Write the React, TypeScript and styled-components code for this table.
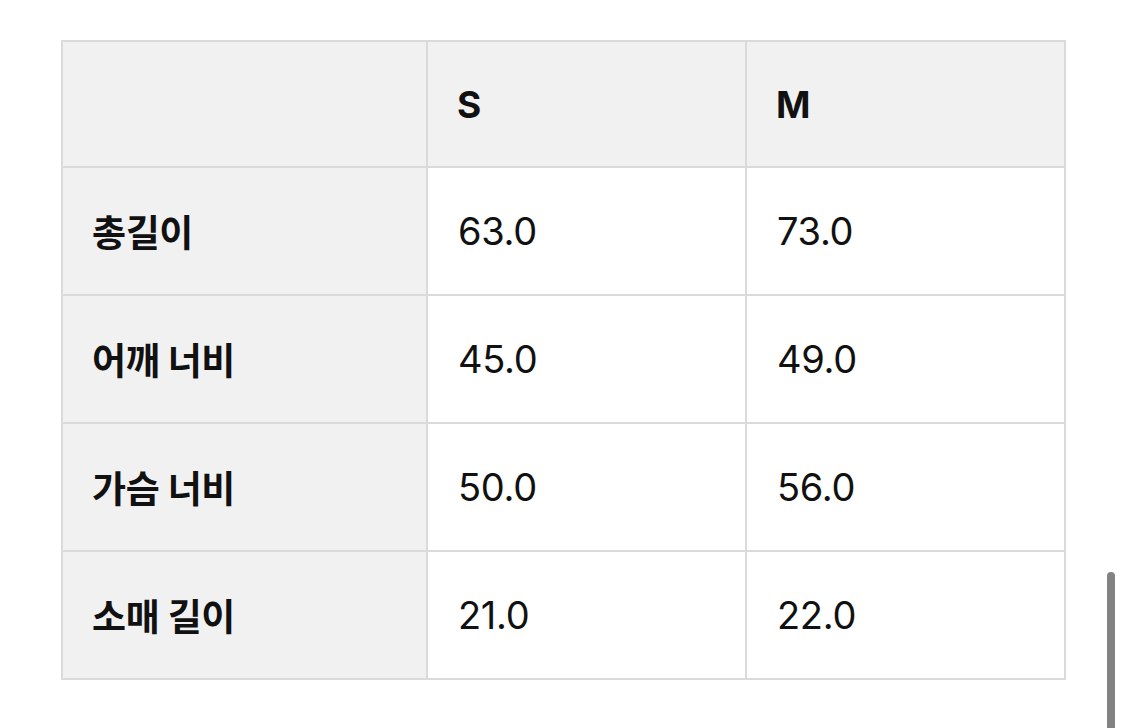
import React from "react";
import styled, { createGlobalStyle } from "styled-components";

const Global = createGlobalStyle`
  html, body { margin: 0; padding: 0; background: #ffffff; }
  body { font-family: Inter, "Noto Sans CJK KR", "Noto Sans", sans-serif; color: #111; }
`;

const Page = styled.div`
  position: relative;
  width: 1125px;
  height: 728px;
  overflow: hidden;
  padding: 40px 0 0 61px;
  box-sizing: border-box;
`;

const Table = styled.table`
  width: 1003px;
  border-collapse: collapse;
  table-layout: fixed;
  border: 2px solid #e4e4e4;
`;

const Row = styled.tr<{ $top?: boolean }>`
  height: ${(p) => (p.$top ? "126px" : "128px")};
`;

const Cell = styled.td<{ $head?: boolean; $bold?: boolean }>`
  box-sizing: border-box;
  padding: 0 0 0 ${(p) => (p.$bold ? "29px" : "30px")};
  border: 2px solid #dadada;
  background: ${(p) => (p.$head ? "#f1f1f1" : "#ffffff")};
  font-family: Inter, "Noto Sans CJK KR", sans-serif;
  font-weight: ${(p) => (p.$bold ? 700 : 400)};
  font-size: ${(p) => (p.$bold ? "37px" : "38px")};
  letter-spacing: ${(p) => (p.$bold ? "-0.4px" : "-0.3px")};
  color: #111111;
  text-align: left;
  vertical-align: middle;
`;

const Scrollbar = styled.div`
  position: absolute;
  left: 1107px;
  top: 572px;
  width: 8px;
  height: 170px;
  border-radius: 4px;
  background: #828282;
`;

const rows = [
  ["총길이", "63.0", "73.0"],
  ["어깨 너비", "45.0", "49.0"],
  ["가슴 너비", "50.0", "56.0"],
  ["소매 길이", "21.0", "22.0"],
];

export default function App() {
  return (
    <>
      <Global />
      <Page>
        <Table>
          <colgroup>
            <col style={{ width: 365 }} />
            <col style={{ width: 319 }} />
            <col style={{ width: 319 }} />
          </colgroup>
          <tbody>
            <Row $top>
              <Cell $head />
              <Cell $head $bold>S</Cell>
              <Cell $head $bold>M</Cell>
            </Row>
            {rows.map((r) => (
              <Row key={r[0]}>
                <Cell $head $bold>{r[0]}</Cell>
                <Cell>{r[1]}</Cell>
                <Cell>{r[2]}</Cell>
              </Row>
            ))}
          </tbody>
        </Table>
        <Scrollbar />
      </Page>
    </>
  );
}
